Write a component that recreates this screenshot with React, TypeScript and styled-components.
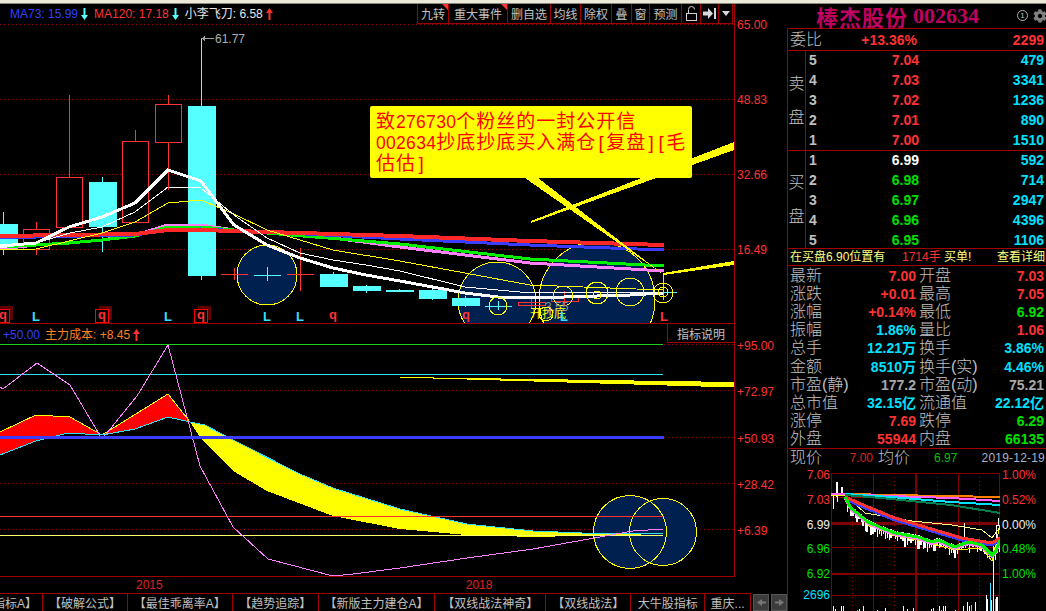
import React from "react";
import styled, { createGlobalStyle } from "styled-components";
import { FaCog } from "react-icons/fa";

const RED = "#ff3232";
const GREEN = "#00e000";
const CYAN = "#00e0ff";
const GRAY = "#c0c0c0";
const LINE = "#a00000";
const YELLOW = "#ffff00";
const NAVY = "#00204f";
const SANS = `"Liberation Sans", "Noto Sans CJK SC", sans-serif`;

const GlobalStyle = createGlobalStyle`
  html, body {
    margin: 0;
    background: #000;
    overflow: hidden;
  }
  * {
    box-sizing: border-box;
  }
`;

const Shell = styled.div`
  width: 1046px;
  height: 611px;
  display: flex;
  flex-direction: column;
  background: #000;
  color: ${GRAY};
  font-family: ${SANS};
  font-size: 12px;
  overflow: hidden;
`;

const TopStrip = styled.div`
  height: 4px;
  background: #ece9d8;
  border-bottom: 1px solid #8a8a80;
`;

const Main = styled.div`
  flex: 1;
  display: flex;
  min-height: 0;
`;

const LeftColumn = styled.div`
  width: 787px;
  display: flex;
  flex-direction: column;
`;

const Pane = styled.div<{ $h: number }>`
  height: ${({ $h }) => $h}px;
  display: flex;
`;

const Plot = styled.div`
  position: relative;
  width: 735px;
  height: 100%;
  border-right: 1px solid ${LINE};
  border-bottom: 1px solid ${LINE};

  svg.chart {
    display: block;
  }
`;

const Axis = styled.div<{ $top: number; $gap: number }>`
  flex: 1;
  display: flex;
  flex-direction: column;
  padding: ${({ $top }) => $top}px 0 0 2px;
  gap: ${({ $gap }) => $gap}px;
  color: ${RED};
  line-height: 14px;
`;

const Legend = styled.div<{ $left: number; $top: number }>`
  position: absolute;
  top: ${({ $top }) => $top}px;
  left: ${({ $left }) => $left}px;
  display: flex;
  align-items: center;
  height: 14px;
  line-height: 14px;
  white-space: nowrap;
`;

const LegendItem = styled.span<{ $c: string; $gap?: number }>`
  color: ${({ $c }) => $c};
  margin-right: ${({ $gap }) => $gap ?? 0}px;
`;

const ArrowMark = styled.svg`
  width: 7px;
  height: 12px;
  margin: 0 6px 0 3px;
`;

const Toolbar = styled.div`
  position: absolute;
  top: 0;
  right: 1px;
  display: flex;
  height: 20px;
  background: #000;
  border-bottom: 1px solid ${LINE};
  border-left: 1px solid ${LINE};
`;

const ToolButton = styled.div<{ $w: number; $flag?: boolean }>`
  position: relative;
  width: ${({ $w }) => $w}px;
  display: flex;
  align-items: center;
  justify-content: center;
  border-right: 1px solid ${LINE};
  color: ${GRAY};
  white-space: nowrap;

  &::after {
    content: "";
    display: ${({ $flag }) => ($flag ? "block" : "none")};
    position: absolute;
    top: 0;
    right: 0;
    border-top: 6px solid ${RED};
    border-left: 6px solid transparent;
  }
`;

const Callout = styled.div`
  position: absolute;
  left: 370px;
  top: 102px;
  width: 322px;
  height: 72px;
  padding: 5px 6px;
  background: ${YELLOW};
  border-radius: 2px;
  color: #ff0000;
  font-size: 19px;
  letter-spacing: 1px;
`;

const CalloutLine = styled.div`
  height: 21px;
  line-height: 21px;
  white-space: nowrap;
`;

const Latin = styled.span`
  font-size: 17.5px;
  letter-spacing: 0.3px;
`;

const Bracket = styled.span`
  display: inline-block;
  width: 10px;
  text-align: center;
  letter-spacing: 0;
`;

const HintButton = styled.div`
  position: absolute;
  top: 0;
  right: 0;
  width: 67px;
  height: 19px;
  display: flex;
  align-items: center;
  justify-content: center;
  background: #000;
  border-left: 1px solid ${LINE};
  border-bottom: 1px solid ${LINE};
  color: ${GRAY};
`;

const TimeAxis = styled.div`
  height: 18px;
  display: flex;
  align-items: center;
  gap: 303px;
  padding-left: 136px;
  color: #e02020;
  line-height: 14px;
`;

const TabBar = styled.div`
  flex: 1;
  display: flex;
`;

const Tab = styled.div<{ $w: number; $end?: boolean }>`
  width: ${({ $w }) => $w}px;
  display: flex;
  align-items: center;
  justify-content: ${({ $end }) => ($end ? "flex-end" : "center")};
  padding-right: ${({ $end }) => ($end ? 5 : 0)}px;
  overflow: hidden;
  white-space: nowrap;
  border-top: 1px solid ${LINE};
  border-right: 1px solid ${LINE};
  color: ${GRAY};
`;

const ScrollButton = styled.div`
  width: 16px;
  margin-left: 2px;
  margin-top: 1px;
  display: flex;
  align-items: center;
  justify-content: center;
  background: #3c3c3c;
  border: 1px solid #555;
`;

const Panel = styled.div`
  flex: 1;
  display: flex;
  flex-direction: column;
  min-width: 0;
`;

const Header = styled.div`
  height: 25px;
  display: flex;
  align-items: center;
  padding: 0 0 1px 29px;
  border-bottom: 1px solid ${LINE};
  color: #c00060;
  font-family: "Liberation Serif", "Noto Sans CJK SC", serif;
  font-weight: 700;
  font-size: 22px;
  white-space: nowrap;
`;

const HeaderName = styled.span`
  letter-spacing: 1px;
  margin-right: 5px;
`;

const HeaderIcons = styled.div`
  margin-left: auto;
  display: flex;
  align-items: center;
  gap: 5px;
  margin-right: -1px;
  color: #808080;
`;

const CircleOne = styled.span`
  width: 11px;
  height: 11px;
  border: 1px solid #b0b0b0;
  border-radius: 50%;
  display: flex;
  align-items: center;
  justify-content: center;
  color: #c0c0c0;
  font: 400 8px ${SANS};
`;

const PanelBody = styled.div`
  flex: 1;
  display: flex;
  flex-direction: column;
  border-left: 1px solid ${LINE};
  min-height: 0;
`;

const Label = styled.span`
  color: ${GRAY};
  font-size: 16px;
  font-weight: 300;
  line-height: 18px;
  white-space: nowrap;
`;

const Value = styled.span<{ $c: string }>`
  color: ${({ $c }) => $c};
  font-size: 14px;
  font-weight: 700;
  line-height: 18px;
  white-space: nowrap;
`;

const RatioRow = styled.div`
  height: 22px;
  display: grid;
  grid-template-columns: 46px 81px 1fr;
  align-items: center;
  padding: 0 2px;
  border-bottom: 1px solid ${LINE};

  > :nth-child(n + 2) {
    text-align: right;
  }
`;

const Book = styled.div<{ $h: number }>`
  height: ${({ $h }) => $h}px;
  display: flex;
  border-bottom: 1px solid ${LINE};
`;

const BookSide = styled.div`
  width: 18px;
  display: flex;
  flex-direction: column;
  align-items: center;
  justify-content: center;
  gap: 16px;
  border-right: 1px solid ${LINE};
`;

const BookRows = styled.div`
  flex: 1;
  margin-top: -1px;
  display: flex;
  flex-direction: column;
`;

const BookRow = styled.div`
  flex: 0 0 20px;
  display: grid;
  grid-template-columns: 14px 96px 1fr;
  align-items: center;
  padding: 0 2px 0 3px;

  > :nth-child(n + 2) {
    text-align: right;
  }
`;

const TradeRow = styled.div`
  height: 17px;
  display: grid;
  grid-template-columns: 112px 42px 1fr auto;
  align-items: center;
  padding: 0 1px 0 2px;
  border-bottom: 1px solid ${LINE};
  color: #ffff80;
  line-height: 14px;
  white-space: nowrap;
`;

const TradeVolume = styled.span`
  color: ${RED};
`;

const StatGrid = styled.div`
  display: grid;
  grid-template-columns: 126px 125px;
  grid-auto-rows: 18.1px;
  column-gap: 3px;
  padding: 1px 0 0 2px;
  height: 183px;
  border-bottom: 1px solid ${LINE};
`;

const StatCell = styled.div`
  display: flex;
  justify-content: space-between;
  align-items: center;
`;

const QuoteRow = styled.div`
  height: 18px;
  display: grid;
  grid-template-columns: 56px 27px 61px 1fr;
  align-items: center;
  padding: 0 1px 0 2px;
  line-height: 14px;
  white-space: nowrap;
`;

const QuoteLabel = styled(Label)`
  padding-left: 5px;
`;

const QuoteTail = styled.div`
  display: flex;
  justify-content: space-between;
`;

const QuoteNumber = styled.span<{ $c: string; $wide?: boolean }>`
  color: ${({ $c }) => $c};
  font-size: 12px;
  text-align: right;
  letter-spacing: ${({ $wide }) => ($wide ? "0.2px" : "0")};
`;

const MiniRow = styled.div`
  flex: 1;
  display: flex;
  min-height: 0;
`;

const MiniLabels = styled.div<{ $w: number; $right?: boolean }>`
  width: ${({ $w }) => $w}px;
  display: flex;
  flex-direction: column;
  gap: 10.75px;
  text-align: ${({ $right }) => ($right ? "right" : "left")};
  padding: ${({ $right }) => ($right ? "1px 1px 0 0" : "1px 0 0 2px")};
  line-height: 14px;

  > :nth-child(6) {
    margin-top: -4px;
  }
`;

const MiniLabel = styled.span<{ $c: string }>`
  color: ${({ $c }) => $c};
  white-space: nowrap;
`;

const MiniPlot = styled.div`
  width: 169px;
  margin-top: 6px;

  svg {
    display: block;
  }
`;

type Pt = [number, number];

const toPoints = (pts: Pt[]) => pts.map(p => p.join(",")).join(" ");

const yAt = (pts: Pt[], x: number) => {
  for (let i = 1; i < pts.length; i++) {
    if (x <= pts[i][0]) {
      const [x0, y0] = pts[i - 1];
      const [x1, y1] = pts[i];
      return y0 + ((y1 - y0) * (x - x0)) / (x1 - x0);
    }
  }
  return pts[pts.length - 1][1];
};

const noise = (i: number) => {
  const v = Math.sin(i * 12.9898) * 43758.5453;
  return v - Math.floor(v);
};

// mid = wick x, cyan filled body = falling day
const candles: { x: number; w: number; mid: number; top: number; bottom: number; high: number; low: number; fall?: boolean }[] = [
  { x: 0, w: 17, mid: 3, top: 224, bottom: 243, high: 212, low: 255, fall: true },
  { x: 23, w: 26, mid: 36, top: 229, bottom: 249, high: 222, low: 255 },
  { x: 56, w: 26, mid: 69, top: 177, bottom: 227, high: 95, low: 227 },
  { x: 89, w: 27, mid: 102, top: 182, bottom: 226, high: 177, low: 252, fall: true },
  { x: 122, w: 26, mid: 135, top: 141, bottom: 222, high: 130, low: 222 },
  { x: 155, w: 26, mid: 168, top: 104, bottom: 142, high: 95, low: 190 },
  { x: 188, w: 27, mid: 201, top: 106, bottom: 275, high: 38, low: 280, fall: true },
  { x: 320, w: 27, mid: 333, top: 274, bottom: 286, high: 272, low: 287, fall: true },
  { x: 353, w: 27, mid: 366, top: 286, bottom: 290, high: 285, low: 293, fall: true },
  { x: 386, w: 27, mid: 399, top: 290, bottom: 291, high: 289, low: 292, fall: true },
  { x: 419, w: 27, mid: 432, top: 290, bottom: 298, high: 288, low: 300, fall: true },
  { x: 452, w: 27, mid: 465, top: 298, bottom: 305, high: 296, low: 307, fall: true },
  { x: 518, w: 27, mid: 531, top: 302, bottom: 305, high: 298, low: 308 },
  { x: 551, w: 27, mid: 564, top: 296, bottom: 301, high: 291, low: 305 },
];

const crosses: { x: number; y: number; c: string; top: number; bottom: number }[] = [
  { x: 234, y: 274, c: "#ff3232", top: 268, bottom: 280 },
  { x: 267, y: 275, c: "#55ffff", top: 267, bottom: 281 },
  { x: 300, y: 274, c: "#ff3232", top: 248, bottom: 291 },
  { x: 498, y: 306, c: "#55ffff", top: 301, bottom: 310 },
  { x: 663, y: 292, c: "#55ffff", top: 275, bottom: 300 },
];

const priceCircles: [number, number, number][] = [
  [267, 275, 30],
  [497, 301, 39],
  [597, 300, 58],
];

const ringCircles: [number, number, number][] = [
  [498, 306, 9],
  [546, 314, 7],
  [563, 296, 10],
  [597, 293, 11],
  [597, 295, 4],
  [630, 292, 14],
  [663, 293, 10],
  [663, 292, 5],
];

const maLines: { pts: Pt[]; c: string; w: number }[] = [
  {
    c: "#ff80ff",
    w: 3,
    pts: [[0, 249], [36, 245], [69, 243], [102, 240], [135, 235], [168, 225], [201, 225], [234, 230], [267, 232], [300, 235], [333, 238], [400, 247], [530, 263], [664, 271]],
  },
  {
    c: "#00f000",
    w: 3,
    pts: [[0, 247], [36, 245], [69, 243], [102, 240], [135, 236], [168, 227], [201, 227], [234, 230], [267, 233], [400, 244], [530, 259], [664, 266]],
  },
  {
    c: "#3c3cff",
    w: 3,
    pts: [[0, 237], [36, 237], [135, 235], [168, 230], [201, 229], [267, 232], [400, 239], [530, 245], [664, 250]],
  },
  {
    c: "#ff2828",
    w: 4,
    pts: [[0, 236], [135, 234], [168, 230], [201, 230], [267, 232], [400, 236], [530, 241], [664, 245]],
  },
  {
    c: "#ffff00",
    w: 1,
    pts: [[0, 250], [36, 249], [102, 233], [135, 222], [168, 203], [201, 200], [234, 214], [267, 230], [300, 240], [333, 250], [400, 261], [530, 285], [663, 290]],
  },
  {
    c: "#ffffff",
    w: 1,
    pts: [[0, 248], [36, 243], [70, 233], [102, 227], [135, 212], [168, 187], [201, 188], [234, 215], [267, 238], [300, 253], [333, 260], [366, 265], [400, 271], [465, 287], [498, 290], [531, 293], [663, 292]],
  },
  {
    c: "#ffffff",
    w: 3,
    pts: [[0, 246], [36, 243], [69, 227], [102, 217], [135, 203], [168, 170], [201, 181], [234, 225], [267, 245], [300, 258], [333, 268], [366, 275], [400, 281], [465, 293], [498, 297], [564, 297], [597, 296], [630, 295], [663, 293]],
  },
];

const letters: { x: number; t: string; c: string; box?: boolean }[] = [
  { x: 3, t: "q", c: RED, box: true },
  { x: 36, t: "L", c: "#33ddff" },
  { x: 102, t: "q", c: RED, box: true },
  { x: 168, t: "L", c: "#33ddff" },
  { x: 201, t: "q", c: RED, box: true },
  { x: 267, t: "L", c: "#33ddff" },
  { x: 300, t: "L", c: "#33ddff" },
  { x: 333, t: "q", c: RED },
  { x: 466, t: "q", c: RED },
  { x: 564, t: "L", c: "#33ddff" },
  { x: 664, t: "L", c: RED },
];

const PriceChart = () => (
  <svg className="chart" width={734} height={319} viewBox="0 4 734 319" shapeRendering="crispEdges">
    {[24, 99, 174, 249].map(y => (
      <line key={y} x1={0} x2={734} y1={y + 0.5} y2={y + 0.5} stroke="#a00000" strokeDasharray="1 3" />
    ))}
    {priceCircles.map(([x, y, r]) => (
      <circle key={x} cx={x} cy={y} r={r} fill={NAVY} stroke={YELLOW} />
    ))}
    {candles.map(c => {
      const color = c.fall ? "#55ffff" : "#ff3232";
      return (
        <g key={c.x}>
          <line x1={c.mid + 0.5} x2={c.mid + 0.5} y1={c.high} y2={c.low} stroke={color} />
          <rect
            x={c.x + 0.5}
            y={c.top + 0.5}
            width={c.w}
            height={c.bottom - c.top}
            fill={c.fall ? color : "#000"}
            fillOpacity={c.fall ? 1 : c.x > 500 ? 0 : 1}
            stroke={color}
          />
        </g>
      );
    })}
    {crosses.map(c => (
      <g key={c.x} stroke={c.c}>
        <line x1={c.x - 13} x2={c.x + 14} y1={c.y + 0.5} y2={c.y + 0.5} />
        <line x1={c.x + 0.5} x2={c.x + 0.5} y1={c.top} y2={c.bottom} />
      </g>
    ))}
    {maLines.map((l, i) => (
      <polyline key={i} points={toPoints(l.pts)} fill="none" stroke={l.c} strokeWidth={l.w} />
    ))}
    {ringCircles.map(([x, y, r]) => (
      <circle key={`${x}-${r}`} cx={x} cy={y} r={r} fill="none" stroke={YELLOW} />
    ))}
    <polygon points="531,221 734,142 734,150 531,223" fill={YELLOW} />
    <polygon points="525,178 538,178 664,275" fill={YELLOW} />
    <polygon points="663,273 734,261 734,265 663,275" fill={YELLOW} />
    <line x1={203} x2={214} y1={38.5} y2={38.5} stroke="#a0a0a0" />
    <polygon points="201,38.5 205,36 205,41" fill="#a0a0a0" />
    <text x={215} y={43} fill="#b0b0b0" fontSize={12} fontFamily={SANS}>
      61.77
    </text>
    <text x={545} y={311} fill="#909090" fontSize={12} fontFamily={SANS}>
      3.55
    </text>
    <text x={530} y={318} fill={YELLOW} fontSize={12} fontFamily={SANS}>
      开抄底
    </text>
    {letters.map(l => (
      <g key={l.x}>
        {l.box && (
          <>
            <rect x={l.x - 3} y={306} width={13} height={14} fill="#600000" />
            <rect x={l.x - 6.5} y={309.5} width={13} height={13} fill="#000" stroke="#ff0000" />
          </>
        )}
        <text x={l.x} y={l.t === "q" ? 319 : 321} textAnchor="middle" fill={l.c} fontSize={13} fontWeight={700} fontFamily={SANS}>
          {l.t}
        </text>
      </g>
    ))}
  </svg>
);

const redTop: Pt[] = [[0, 433], [36, 416], [70, 418], [102, 436], [168, 395], [190, 423]];
const redBottom: Pt[] = [[0, 456], [36, 442], [68, 434], [102, 436], [135, 430], [168, 418], [190, 423]];
const yellowTop: Pt[] = [[190, 423], [205, 426], [235, 442], [300, 475], [333, 489], [400, 510], [467, 525], [533, 532], [582, 534], [663, 534]];
const yellowBottom: Pt[] = [[190, 423], [200, 438], [233, 472], [267, 492], [333, 517], [400, 530], [467, 536], [533, 538], [663, 535]];
const costLine: Pt[] = [[0, 388], [3, 390], [37, 364], [70, 386], [102, 440], [137, 397], [168, 346], [200, 467], [233, 528], [268, 560], [333, 577], [353, 575], [400, 569], [467, 559], [533, 550], [600, 538], [633, 532], [663, 530]];

// the far right yellow band widens in steps, as in the source chart
const bandSteps = Array.from({ length: 10 }, (_, i) => ({
  x: 400 + i * 33.4,
  y: 378 + Math.round(i * 0.55),
  h: 1 + Math.round(i * 0.45),
}));

const IndicatorChart = () => (
  <svg className="chart" width={734} height={252} viewBox="0 325 734 252" shapeRendering="crispEdges">
    {[391, 438, 484, 530].map(y => (
      <line key={y} x1={0} x2={734} y1={y + 0.5} y2={y + 0.5} stroke="#a00000" strokeDasharray="1 3" />
    ))}
    <line x1={664} x2={734} y1={345.5} y2={345.5} stroke="#a00000" strokeDasharray="1 3" />
    <circle cx={663} cy={533} r={33.5} fill={NAVY} stroke={YELLOW} />
    <circle cx={630} cy={533} r={36.5} fill={NAVY} stroke={YELLOW} />
    <circle cx={663} cy={533} r={33.5} fill="none" stroke={YELLOW} />
    <line x1={0} x2={663} y1={345.5} y2={345.5} stroke="#20d020" />
    <line x1={0} x2={663} y1={375.5} y2={375.5} stroke="#30e0f0" />
    <polygon points={toPoints([...redTop, ...[...redBottom].reverse()])} fill="#ff0000" />
    <polygon points={toPoints([...yellowTop, ...[...yellowBottom].reverse()])} fill={YELLOW} />
    <polyline points={toPoints(redTop)} fill="none" stroke={YELLOW} />
    <polyline points={toPoints(redBottom)} fill="none" stroke="#30e0f0" />
    <polyline points={toPoints(yellowTop)} fill="none" stroke="#30e0f0" />
    <line x1={0} x2={663} y1={517.5} y2={517.5} stroke="#ff3232" />
    <line x1={0} x2={663} y1={536.5} y2={536.5} stroke="#ffff66" />
    <polyline points={toPoints(costLine)} fill="none" stroke="#ff80ff" />
    <rect x={0} y={437} width={664} height={3} fill="#3c3cff" />
    {bandSteps.map(s => (
      <rect key={s.x} x={s.x} y={s.y} width={34} height={s.h} fill={YELLOW} />
    ))}
  </svg>
);

const bigMa: Pt[] = [[14, 24], [37, 34], [64, 45], [97, 55], [131, 65], [161, 70], [169, 65]];
const slowMa: Pt[] = [[14, 24], [20, 35], [37, 49], [51, 55], [64, 60], [87, 64], [101, 69], [107, 67], [124, 74], [137, 69], [151, 72], [161, 82], [165, 78], [169, 67]];
const avgLine: Pt[] = [[20, 27], [34, 40], [64, 45], [81, 48], [121, 52], [151, 57], [161, 65], [169, 54]];

const MiniChart = () => {
  const hours = [42, 85, 127];
  const dots = [21, 63, 106, 148];
  const ticks = Array.from({ length: 78 }, (_, i) => {
    const x = 14 + i * 2;
    const y = yAt(slowMa, x);
    return { x, y1: y - 2, y2: y + 3 + noise(i) * 9, w: noise(i + 7) > 0.5 ? 2 : 1 };
  });
  const bars = Array.from({ length: 84 }, (_, i) => {
    const x = 2 + i * 2;
    const late = i > 66 ? 10 : 0;
    const h = noise(i + 40) > 0.55 ? 1 + noise(i + 90) * (5 + late) : 0;
    const c = i % 5 === 0 ? "#ffff80" : i % 3 === 0 ? "#33ddff" : "#fff";
    return { x, h, c };
  });
  return (
    <svg width={169} height={138} viewBox="0 0 169 138" shapeRendering="crispEdges">
      {dots.map(x => (
        <line key={x} x1={x + 0.5} x2={x + 0.5} y1={0} y2={138} stroke="#a00000" strokeDasharray="1 3" />
      ))}
      {hours.map(x => (
        <line key={x} x1={x} x2={x} y1={0} y2={138} stroke="#800000" strokeWidth={x === 85 ? 2 : 1} />
      ))}
      <rect x={0.5} y={0.5} width={168} height={138} fill="none" stroke="#800000" />
      <rect x={0} y={24} width={169} height={1} fill="#800000" />
      <rect x={0} y={49} width={169} height={3} fill="#800000" />
      <rect x={0} y={74} width={169} height={1} fill="#800000" />
      <rect x={0} y={100} width={169} height={2} fill="#800000" />
      <rect x={0} y={122} width={169} height={1} fill="#800000" />
      <g fill="#fff">
        <rect x={2} y={22} width={1} height={14} />
        <rect x={5} y={9} width={2} height={15} />
        <rect x={6} y={22} width={1} height={7} />
        <rect x={10} y={14} width={2} height={8} />
      </g>
      {ticks.map(t => (
        <line key={t.x} x1={t.x} x2={t.x} y1={t.y1} y2={t.y2} stroke="#fff" strokeWidth={t.w} />
      ))}
      <line x1={133} x2={133} y1={50} y2={72} stroke="#fff" />
      <line x1={162} x2={162} y1={70} y2={100} stroke="#fff" />
      <polyline points="165,80 165,52 167,52 167,45" fill="none" stroke="#fff" />
      {bars.map(b => b.h > 0 && <line key={b.x} x1={b.x} x2={b.x} y1={138 - b.h} y2={138} stroke={b.c} />)}
      <line x1={162} x2={162} y1={100} y2={138} stroke="#ffff80" />
      <line x1={159} x2={159} y1={110} y2={138} stroke="#33ddff" />
      <line x1={155} x2={155} y1={122} y2={138} stroke="#fff" />
      <line x1={165} x2={165} y1={124} y2={138} stroke="#fff" />
      <polyline points="0,22 14,23 20,36 37,52 64,63 87,67 124,77 151,75 161,88 169,52" fill="none" stroke={YELLOW} />
      <polyline points={toPoints(avgLine)} fill="none" stroke="#ffff80" />
      <polyline points="0,20.5 60,22 169,24" fill="none" stroke="#ff8000" strokeWidth={2} />
      <polyline points="0,21 60,23 120,25 169,28" fill="none" stroke="#ff60ff" strokeWidth={2} />
      <polyline points="14,21 60,24 120,29 169,32" fill="none" stroke="#00e0ff" strokeWidth={2} />
      <polyline points="14,22 50,25 120,32 169,40" fill="none" stroke="#008050" strokeWidth={2} />
      <polyline points={toPoints(bigMa.map(([x, y]) => [x, y + 2] as Pt))} fill="none" stroke="#3c3cff" strokeWidth={3} />
      <polyline points={toPoints(bigMa)} fill="none" stroke="#ff3232" strokeWidth={3} />
      <polyline points={toPoints(slowMa.map(([x, y]) => [x, y + 2] as Pt))} fill="none" stroke="#ff80ff" strokeWidth={2} />
      <polyline points={toPoints(slowMa)} fill="none" stroke="#00f000" strokeWidth={3} />
    </svg>
  );
};

const Arrow = ({ up, c }: { up?: boolean; c: string }) => (
  <ArrowMark viewBox="0 0 7 12">
    <polygon
      points={up ? "3.5,0 7,5 4.5,5 4.5,12 2.5,12 2.5,5 0,5" : "3.5,12 7,7 4.5,7 4.5,0 2.5,0 2.5,7 0,7"}
      fill={c}
    />
  </ArrowMark>
);

const tools: { t: string; w: number; flag?: boolean }[] = [
  { t: "九转", w: 31, flag: true },
  { t: "重大事件", w: 59, flag: true },
  { t: "删自选", w: 43 },
  { t: "均线", w: 30 },
  { t: "除权", w: 31 },
  { t: "叠", w: 20 },
  { t: "窗", w: 18 },
  { t: "预测", w: 32 },
];

const tabs: { t: string; w: number; end?: boolean }[] = [
  { t: "指标A】", w: 43, end: true },
  { t: "【破解公式】", w: 85 },
  { t: "【最佳乖离率A】", w: 105 },
  { t: "【趋势追踪】", w: 86 },
  { t: "【新版主力建仓A】", w: 117 },
  { t: "【双线战法神奇】", w: 111 },
  { t: "【双线战法】", w: 85 },
  { t: "大牛股指标", w: 74 },
  { t: "重庆...", w: 46 },
];

const sells = [
  ["5", "7.04", "479"],
  ["4", "7.03", "3341"],
  ["3", "7.02", "1236"],
  ["2", "7.01", "890"],
  ["1", "7.00", "1510"],
];

const buys = [
  ["1", "6.99", "592", "#fff"],
  ["2", "6.98", "714", GREEN],
  ["3", "6.97", "2947", GREEN],
  ["4", "6.96", "4396", GREEN],
  ["5", "6.95", "1106", GREEN],
];

const stats: [string, string, string, string, string, string][] = [
  ["最新", "7.00", RED, "开盘", "7.03", RED],
  ["涨跌", "+0.01", RED, "最高", "7.05", RED],
  ["涨幅", "+0.14%", RED, "最低", "6.92", GREEN],
  ["振幅", "1.86%", CYAN, "量比", "1.06", RED],
  ["总手", "12.21万", CYAN, "换手", "3.86%", CYAN],
  ["金额", "8510万", CYAN, "换手(实)", "4.46%", CYAN],
  ["市盈(静)", "177.2", "#a8a8a8", "市盈(动)", "75.21", "#a8a8a8"],
  ["总市值", "32.15亿", CYAN, "流通值", "22.12亿", CYAN],
  ["涨停", "7.69", RED, "跌停", "6.29", GREEN],
  ["外盘", "55944", RED, "内盘", "66135", GREEN],
];

const App = () => (
  <Shell>
    <GlobalStyle />
    <TopStrip />
    <Main>
      <LeftColumn>
        <Pane $h={320}>
          <Plot>
            <PriceChart />
            <Legend $left={10} $top={3}>
              <LegendItem $c="#3040ff">MA73: 15.99</LegendItem>
              <Arrow c="#55ffff" />
              <LegendItem $c={RED}>MA120: 17.18</LegendItem>
              <Arrow c="#55ffff" />
              <LegendItem $c="#e8e8e8">小李飞刀: 6.58</LegendItem>
              <Arrow up c={RED} />
            </Legend>
            <Toolbar>
              {tools.map(t => (
                <ToolButton key={t.t} $w={t.w} $flag={t.flag}>
                  {t.t}
                </ToolButton>
              ))}
              <ToolButton $w={19}>
                <svg width="13" height="15" viewBox="0 0 13 15">
                  <rect x="1.5" y="7.5" width="10" height="7" fill="none" stroke="#d0d0d0" />
                  <path d="M3.5 7V3.5a3 3 0 0 1 6 0" fill="none" stroke="#d0d0d0" />
                </svg>
              </ToolButton>
              <ToolButton $w={18}>
                <svg width="13" height="11" viewBox="0 0 13 11">
                  <polygon points="0,3.5 5,3.5 5,0 10,5.5 5,11 5,7.5 0,7.5" fill="#d8d8d8" />
                  <rect x="11" y="0" width="2" height="11" fill="#d8d8d8" />
                </svg>
              </ToolButton>
              <ToolButton $w={14}>
                <svg width="8" height="5" viewBox="0 0 8 5">
                  <polygon points="0,0 8,0 4,5" fill="#d8d8d8" />
                </svg>
              </ToolButton>
            </Toolbar>
            <Callout>
              <CalloutLine>
                致<Latin>276730</Latin>个粉丝的一封公开信
              </CalloutLine>
              <CalloutLine>
                <Latin>002634</Latin>抄底抄底买入满仓<Bracket>[</Bracket>复盘<Bracket>]</Bracket><Bracket>[</Bracket>毛
              </CalloutLine>
              <CalloutLine>
                估估<Bracket>]</Bracket>
              </CalloutLine>
            </Callout>
          </Plot>
          <Axis $top={14} $gap={61}>
            <span>65.00</span>
            <span>48.83</span>
            <span>32.66</span>
            <span>16.49</span>
          </Axis>
        </Pane>
        <Pane $h={253}>
          <Plot>
            <IndicatorChart />
            <Legend $left={3} $top={4}>
              <LegendItem $c="#3040ff" $gap={5}>+50.00</LegendItem>
              <LegendItem $c="#ff8020">主力成本: +8.45</LegendItem>
              <Arrow up c={RED} />
            </Legend>
            <HintButton>指标说明</HintButton>
          </Plot>
          <Axis $top={15} $gap={32.3}>
            <span>+95.00</span>
            <span>+72.97</span>
            <span>+50.93</span>
            <span>+28.42</span>
            <span>+6.39</span>
          </Axis>
        </Pane>
        <TimeAxis>
          <span>2015</span>
          <span>2018</span>
        </TimeAxis>
        <TabBar>
          {tabs.map(t => (
            <Tab key={t.t} $w={t.w} $end={t.end}>
              {t.t}
            </Tab>
          ))}
          <ScrollButton>
            <svg width="9" height="7" viewBox="0 0 9 7">
              <polygon points="0,3.5 5,0 5,7" fill="#777" />
              <rect x="5" y="2.5" width="4" height="2" fill="#777" />
            </svg>
          </ScrollButton>
          <ScrollButton>
            <svg width="9" height="7" viewBox="0 0 9 7">
              <polygon points="9,3.5 4,0 4,7" fill="#777" />
              <rect x="0" y="2.5" width="4" height="2" fill="#777" />
            </svg>
          </ScrollButton>
        </TabBar>
      </LeftColumn>
      <Panel>
        <Header>
          <HeaderName>棒杰股份</HeaderName>
          <span>002634</span>
          <HeaderIcons>
            <CircleOne>1</CircleOne>
            <FaCog size={14} />
          </HeaderIcons>
        </Header>
        <PanelBody>
          <RatioRow>
            <Label>委比</Label>
            <Value $c={RED}>+13.36%</Value>
            <Value $c={RED}>2299</Value>
          </RatioRow>
          <Book $h={100}>
            <BookSide>
              <Label>卖</Label>
              <Label>盘</Label>
            </BookSide>
            <BookRows>
              {sells.map(([level, price, volume]) => (
                <BookRow key={level}>
                  <Value $c={GRAY}>{level}</Value>
                  <Value $c={RED}>{price}</Value>
                  <Value $c={CYAN}>{volume}</Value>
                </BookRow>
              ))}
            </BookRows>
          </Book>
          <Book $h={98}>
            <BookSide>
              <Label>买</Label>
              <Label>盘</Label>
            </BookSide>
            <BookRows>
              {buys.map(([level, price, volume, c]) => (
                <BookRow key={level}>
                  <Value $c={GRAY}>{level}</Value>
                  <Value $c={c}>{price}</Value>
                  <Value $c={CYAN}>{volume}</Value>
                </BookRow>
              ))}
            </BookRows>
          </Book>
          <TradeRow>
            <span>在买盘6.90位置有</span>
            <TradeVolume>1714手</TradeVolume>
            <span>买单!</span>
            <span>查看详细</span>
          </TradeRow>
          <StatGrid>
            {stats.map(([a, av, ac, b, bv, bc]) => (
              <React.Fragment key={a}>
                <StatCell>
                  <Label>{a}</Label>
                  <Value $c={ac}>{av}</Value>
                </StatCell>
                <StatCell>
                  <Label>{b}</Label>
                  <Value $c={bc}>{bv}</Value>
                </StatCell>
              </React.Fragment>
            ))}
          </StatGrid>
          <QuoteRow>
            <Label>现价</Label>
            <QuoteNumber $c="#e02020">7.00</QuoteNumber>
            <QuoteLabel>均价</QuoteLabel>
            <QuoteTail>
              <QuoteNumber $c="#00c000">6.97</QuoteNumber>
              <QuoteNumber $c="#a8b0c8" $wide>2019-12-19</QuoteNumber>
            </QuoteTail>
          </QuoteRow>
          <MiniRow>
            <MiniLabels $w={43} $right>
              <MiniLabel $c={RED}>7.06</MiniLabel>
              <MiniLabel $c={RED}>7.03</MiniLabel>
              <MiniLabel $c="#f0f0f0">6.99</MiniLabel>
              <MiniLabel $c={GREEN}>6.96</MiniLabel>
              <MiniLabel $c={GREEN}>6.92</MiniLabel>
              <MiniLabel $c={CYAN}>2696</MiniLabel>
            </MiniLabels>
            <MiniPlot>
              <MiniChart />
            </MiniPlot>
            <MiniLabels $w={45}>
              <MiniLabel $c={RED}>1.00%</MiniLabel>
              <MiniLabel $c={RED}>0.52%</MiniLabel>
              <MiniLabel $c="#f0f0f0">0.00%</MiniLabel>
              <MiniLabel $c={GREEN}>0.48%</MiniLabel>
              <MiniLabel $c={GREEN}>1.00%</MiniLabel>
            </MiniLabels>
          </MiniRow>
        </PanelBody>
      </Panel>
    </Main>
  </Shell>
);

export default App;
